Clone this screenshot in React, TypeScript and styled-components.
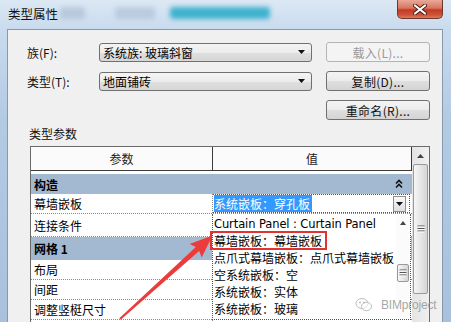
import React from 'react';
import styled, { createGlobalStyle } from 'styled-components';

const GlobalStyle = createGlobalStyle`
  html, body { margin: 0; padding: 0; }
  body {
    width: 451px; height: 322px; overflow: hidden;
    font-family: "Liberation Sans", "Noto Sans CJK SC", sans-serif;
    font-size: 12px; color: #000;
  }
`;

const Window = styled.div`
  position: relative;
  width: 451px; height: 322px;
  background: linear-gradient(180deg, #dce8f4 0px, #c9dbee 29px, #b3cae3 120px, #a9c1dc 322px);
  display: flex; flex-direction: column;
  overflow: hidden;
`;

const TitleBar = styled.div`
  height: 29px; flex: none;
  display: flex; align-items: flex-start;
  padding-left: 8px;
`;

const Title = styled.div`
  font-family: "Noto Sans CJK SC", sans-serif;
  font-size: 12.5px; line-height: 14px;
  margin-top: 7px; color: #111;
`;

const CloseBtn = styled.div`
  margin-left: auto; margin-right: 8px;
  width: 46px; height: 19px; box-sizing: border-box;
  border: 1px solid #6a3a30; border-top: none;
  border-radius: 0 0 5px 5px;
  background: linear-gradient(180deg, #e9a99a 0%, #d9755f 45%, #c33a22 55%, #d0563b 85%, #e07a5a 100%);
  display: flex; align-items: center; justify-content: center;
`;

const Blur = styled.div`
  position: absolute; top: 4px; left: 60px;
  width: 215px; height: 18px;
  filter: blur(2.5px);
  pointer-events: none;
  display: flex; align-items: center;
`;

const BlurBlob = styled.div<{ $w: number; $c: string; $ml: number }>`
  width: ${p => p.$w}px; height: 12px; margin-left: ${p => p.$ml}px;
  background: ${p => p.$c}; border-radius: 3px;
`;

const Body = styled.div`
  flex: 1;
  margin: 0 8px 0 7px;
  border: 1px solid #8799ad; border-bottom: none;
  background: #f0f0f0;
  padding: 12px 12px 0 19px;
  display: flex; flex-direction: column;
`;

const FormGrid = styled.div`
  display: grid;
  grid-template-columns: 58px 213px 104px;
  grid-template-rows: 20px 20px 20px;
  column-gap: 14px; row-gap: 9px;
  align-items: center;
`;

const Label = styled.div`
  font-family: "Noto Sans CJK SC", sans-serif;
  font-size: 12px; color: #111;
`;

const Select = styled.div`
  height: 19px; box-sizing: border-box;
  border: 1px solid #707070; border-radius: 3px;
  background: linear-gradient(180deg, #f4f4f4 0%, #ececec 50%, #dfdfdf 51%, #d6d6d6 100%);
  display: flex; align-items: center;
  padding: 0 6px 0 3px;
  font-family: "Noto Sans CJK SC", sans-serif;
  font-size: 12px;
`;

const SelectText = styled.span`flex: 1;`;

const Button = styled.div<{ $disabled?: boolean }>`
  height: 20px; box-sizing: border-box;
  border: 1px solid ${p => (p.$disabled ? '#b0b5b9' : '#707070')};
  border-radius: 3px;
  background: ${p => p.$disabled
    ? '#f4f4f4'
    : 'linear-gradient(180deg, #f4f4f4 0%, #ececec 50%, #dfdfdf 51%, #d4d4d4 100%)'};
  color: ${p => (p.$disabled ? '#9a9a9a' : '#111')};
  display: flex; align-items: center; justify-content: center;
  font-family: "Noto Sans CJK SC", sans-serif;
  font-size: 12px; letter-spacing: 0.3px;
`;

const SectionLabel = styled(Label)`
  margin: 7px 0 0 2px;
  line-height: 14px;
`;

const Table = styled.div`
  margin: 5px 0 0 3px;
  width: 400px; box-sizing: border-box;
  border: 1px solid #6a6a6a; border-bottom: none;
  background: #fff;
  display: flex;
  flex: 1;
`;

const Pane = styled.div`
  position: relative;
  width: 381px;
  display: flex; flex-direction: column;
  font-family: "Noto Sans CJK SC", sans-serif;
`;

const HeaderRow = styled.div`
  display: grid; grid-template-columns: 182px 199px;
  height: 24px; box-sizing: border-box;
  border-bottom: 1px solid #3a3a3a;
  background: #fbfbfb;
`;

const HeaderCell = styled.div`
  display: flex; align-items: center; justify-content: center;
  border-right: 1px solid #3a3a3a;
  font-size: 12px; color: #222;
`;

const Spacer = styled.div`height: 3px;`;

const Band = styled.div<{ $h: number }>`
  height: ${p => p.$h}px;
  background: #a3b9d1;
  display: flex; align-items: center;
  padding: 0 9px 0 3px;
  font-weight: bold; font-size: 12px;
`;

const BandText = styled.span`flex: 1;`;

const Row = styled.div<{ $h: number }>`
  height: ${p => p.$h}px; box-sizing: border-box;
  display: grid; grid-template-columns: 182px 199px;
  border-bottom: 1px dotted #8a8a8a;
`;

const NameCell = styled.div`
  display: flex; align-items: center;
  padding-left: 3px;
  border-right: 1px dotted #8a8a8a;
  font-size: 12px;
`;

const ValueCell = styled.div`
  display: flex; align-items: center;
  padding-left: 1px;
  font-size: 12px;
`;

const ComboCell = styled(ValueCell)`
  border: 1px dotted #555;
  border-left: none;
  margin-right: 2px;
`;

const Highlight = styled.span`
  background: #3399ff; color: #fff;
  padding: 1px 2px 1px 0;
  line-height: 15px;
`;

const ComboBtn = styled.div`
  margin-left: auto; margin-right: 3px;
  width: 13px; height: 16px; box-sizing: border-box;
  border: 1px solid #8f8f8f;
  background: linear-gradient(180deg, #fafafa, #dedede);
  display: flex; align-items: center; justify-content: center;
`;

const Popup = styled.div`
  position: absolute;
  top: 67px; left: 181px;
  width: 199px; height: 106px; box-sizing: border-box;
  background: #fff;
  border: 1px dotted #555; border-top: none;
  display: flex;
`;

const PopupList = styled.div`
  flex: 1;
  padding: 1px 0 0 1px;
  display: flex; flex-direction: column;
`;

const Item = styled.div<{ $mark?: boolean }>`
  height: 17px; box-sizing: border-box;
  display: flex; align-items: center;
  font-size: 12px;
  white-space: nowrap;
  ${p => p.$mark ? `
    outline: 2px solid #e4322f;
    outline-offset: -1px;
    width: 115px;
    margin-left: -3px;
    padding-left: 3px;
  ` : ''}
`;

const Latin = styled.span`
  font-family: "DejaVu Sans", "Noto Sans", sans-serif;
  font-size: 11.5px;
  letter-spacing: -0.1px;
`;

const PopupScroll = styled.div`
  width: 13px; margin-right: 1px;
  display: flex; flex-direction: column; align-items: center;
  background: #fbfbfb;
`;

const ScrollArrow = styled.div<{ $h: number }>`
  height: ${p => p.$h}px; width: 100%;
  display: flex; align-items: center; justify-content: center;
`;

const Thumb = styled.div<{ $h: number; $w: number; $mt: number }>`
  margin-top: ${p => p.$mt}px;
  width: ${p => p.$w}px; height: ${p => p.$h}px; box-sizing: border-box;
  border: 1px solid #999;
  border-radius: 2px;
  background: linear-gradient(90deg, #f6f6f6 0%, #e6e6e6 50%, #d5d5d5 100%);
  display: flex; align-items: center; justify-content: center;
`;

const VScroll = styled.div`
  width: 17px;
  background: linear-gradient(90deg, #e4e4e4, #f0f0f0);
  display: flex; flex-direction: column; align-items: center;
`;

const Overlay = styled.svg`
  position: absolute; left: 0; top: 0;
  pointer-events: none;
`;

const Watermark = styled.div`
  position: absolute; left: 355px; top: 297px;
  display: flex; align-items: center; gap: 8px;
  color: rgba(150, 150, 150, 0.85);
  font-family: "Liberation Sans", sans-serif;
  font-size: 12px; letter-spacing: -0.2px;
  pointer-events: none;
`;

const Tri = ({ up = false, w = 7, h = 4, c = '#111' }: { up?: boolean; w?: number; h?: number; c?: string }) => (
  <svg width={w} height={h} viewBox={`0 0 ${w} ${h}`}>
    {up
      ? <polygon points={`0,${h} ${w / 2},0 ${w},${h}`} fill={c} />
      : <polygon points={`0,0 ${w},0 ${w / 2},${h}`} fill={c} />}
  </svg>
);

const Grip = () => (
  <svg width="8" height="8" viewBox="0 0 8 8">
    {[1, 3.5, 6].map(y => (
      <g key={y}>
        <line x1="0.5" y1={y} x2="7.5" y2={y} stroke="#555" strokeWidth="1" />
        <line x1="0.5" y1={y + 1} x2="7.5" y2={y + 1} stroke="#fff" strokeWidth="1" />
      </g>
    ))}
  </svg>
);

const Chevrons = () => (
  <svg width="8" height="10" viewBox="0 0 8 10">
    <polyline points="1,4.5 4,1.5 7,4.5" fill="none" stroke="#111" strokeWidth="1.6" />
    <polyline points="1,8.5 4,5.5 7,8.5" fill="none" stroke="#111" strokeWidth="1.6" />
  </svg>
);

const CloseX = () => (
  <svg width="14" height="11" viewBox="0 0 14 11">
    <path d="M2 1.5 L12 9.5 M12 1.5 L2 9.5" stroke="#4a1e14" strokeWidth="4" strokeLinecap="round" />
    <path d="M2 1.5 L12 9.5 M12 1.5 L2 9.5" stroke="#fff" strokeWidth="2.2" strokeLinecap="round" />
  </svg>
);

const WeIcon = () => (
  <svg width="18" height="16" viewBox="0 0 18 16">
    <ellipse cx="7" cy="6.5" rx="6" ry="5" fill="none" stroke="#bdbdbd" strokeWidth="1" />
    <ellipse cx="11.5" cy="9.5" rx="5" ry="4.2" fill="#fff" fillOpacity="0.6" stroke="#bdbdbd" strokeWidth="1" />
    <circle cx="5" cy="5.5" r="0.9" fill="#bbb" />
    <circle cx="9" cy="5.5" r="0.9" fill="#bbb" />
  </svg>
);

type R = { name: string; h: number };

export default function App() {
  const lower: R[] = [
    { name: '布局', h: 20 },
    { name: '间距', h: 20 },
    { name: '调整竖梃尺寸', h: 20 },
    { name: '', h: 20 },
  ];
  const items = [
    '幕墙嵌板：幕墙嵌板',
    '点爪式幕墙嵌板：点爪式幕墙嵌板',
    '空系统嵌板：空',
    '系统嵌板：实体',
    '系统嵌板：玻璃',
  ];
  return (
    <Window>
      <GlobalStyle />
      <TitleBar>
        <Title>类型属性</Title>
        <CloseBtn><CloseX /></CloseBtn>
      </TitleBar>
      <Blur>
        <BlurBlob $w={25} $c="rgba(150,170,195,0.45)" $ml={0} />
        <BlurBlob $w={40} $c="rgba(140,160,185,0.35)" $ml={30} />
        <BlurBlob $w={100} $c="#3fb2cf" $ml={15} />
      </Blur>
      <Body>
        <FormGrid>
          <Label>族(F):</Label>
          <Select><SelectText>系统族: 玻璃斜窗</SelectText><Tri /></Select>
          <Button $disabled>载入(L)...</Button>
          <Label>类型(T):</Label>
          <Select><SelectText>地面铺砖</SelectText><Tri /></Select>
          <Button>复制(D)...</Button>
          <span />
          <span />
          <Button>重命名(R)...</Button>
        </FormGrid>
        <SectionLabel>类型参数</SectionLabel>
        <Table>
          <Pane>
            <HeaderRow>
              <HeaderCell>参数</HeaderCell>
              <HeaderCell>值</HeaderCell>
            </HeaderRow>
            <Spacer />
            <Band $h={20}><BandText>构造</BandText><Chevrons /></Band>
            <Row $h={20}>
              <NameCell>幕墙嵌板</NameCell>
              <ComboCell>
                <Highlight>系统嵌板：穿孔板</Highlight>
                <ComboBtn><Tri /></ComboBtn>
              </ComboCell>
            </Row>
            <Row $h={23}>
              <NameCell>连接条件</NameCell>
              <ValueCell />
            </Row>
            <Band $h={23}><BandText>网格 1</BandText></Band>
            {lower.map((r, i) => (
              <Row key={i} $h={r.h}>
                <NameCell>{r.name}</NameCell>
                <ValueCell />
              </Row>
            ))}
            <Popup>
              <PopupList>
                <Item><Latin>Curtain Panel : Curtain Panel</Latin></Item>
                {items.map((t, i) => (
                  <Item key={t} $mark={i === 0}>{t}</Item>
                ))}
              </PopupList>
              <PopupScroll>
                <ScrollArrow $h={17}><Tri up w={6} h={4} c="#444" /></ScrollArrow>
                <Thumb $h={18} $w={12} $mt={33}><Grip /></Thumb>
              </PopupScroll>
            </Popup>
          </Pane>
          <VScroll>
            <ScrollArrow $h={17}><Tri up w={7} h={4} c="#444" /></ScrollArrow>
            <Thumb $h={130} $w={15} $mt={0}><Grip /></Thumb>
          </VScroll>
        </Table>
      </Body>
      <Watermark><WeIcon /><span>BIMproject</span></Watermark>
      <Overlay width="451" height="322" viewBox="0 0 451 322">
        <polygon
          points="119.3,318.3 195.8,247.1 189.7,244 212.5,235.5 201.7,257.4 199.2,250.9 120.7,319.7"
          fill="#ec3b3b"
        />
      </Overlay>
    </Window>
  );
}
